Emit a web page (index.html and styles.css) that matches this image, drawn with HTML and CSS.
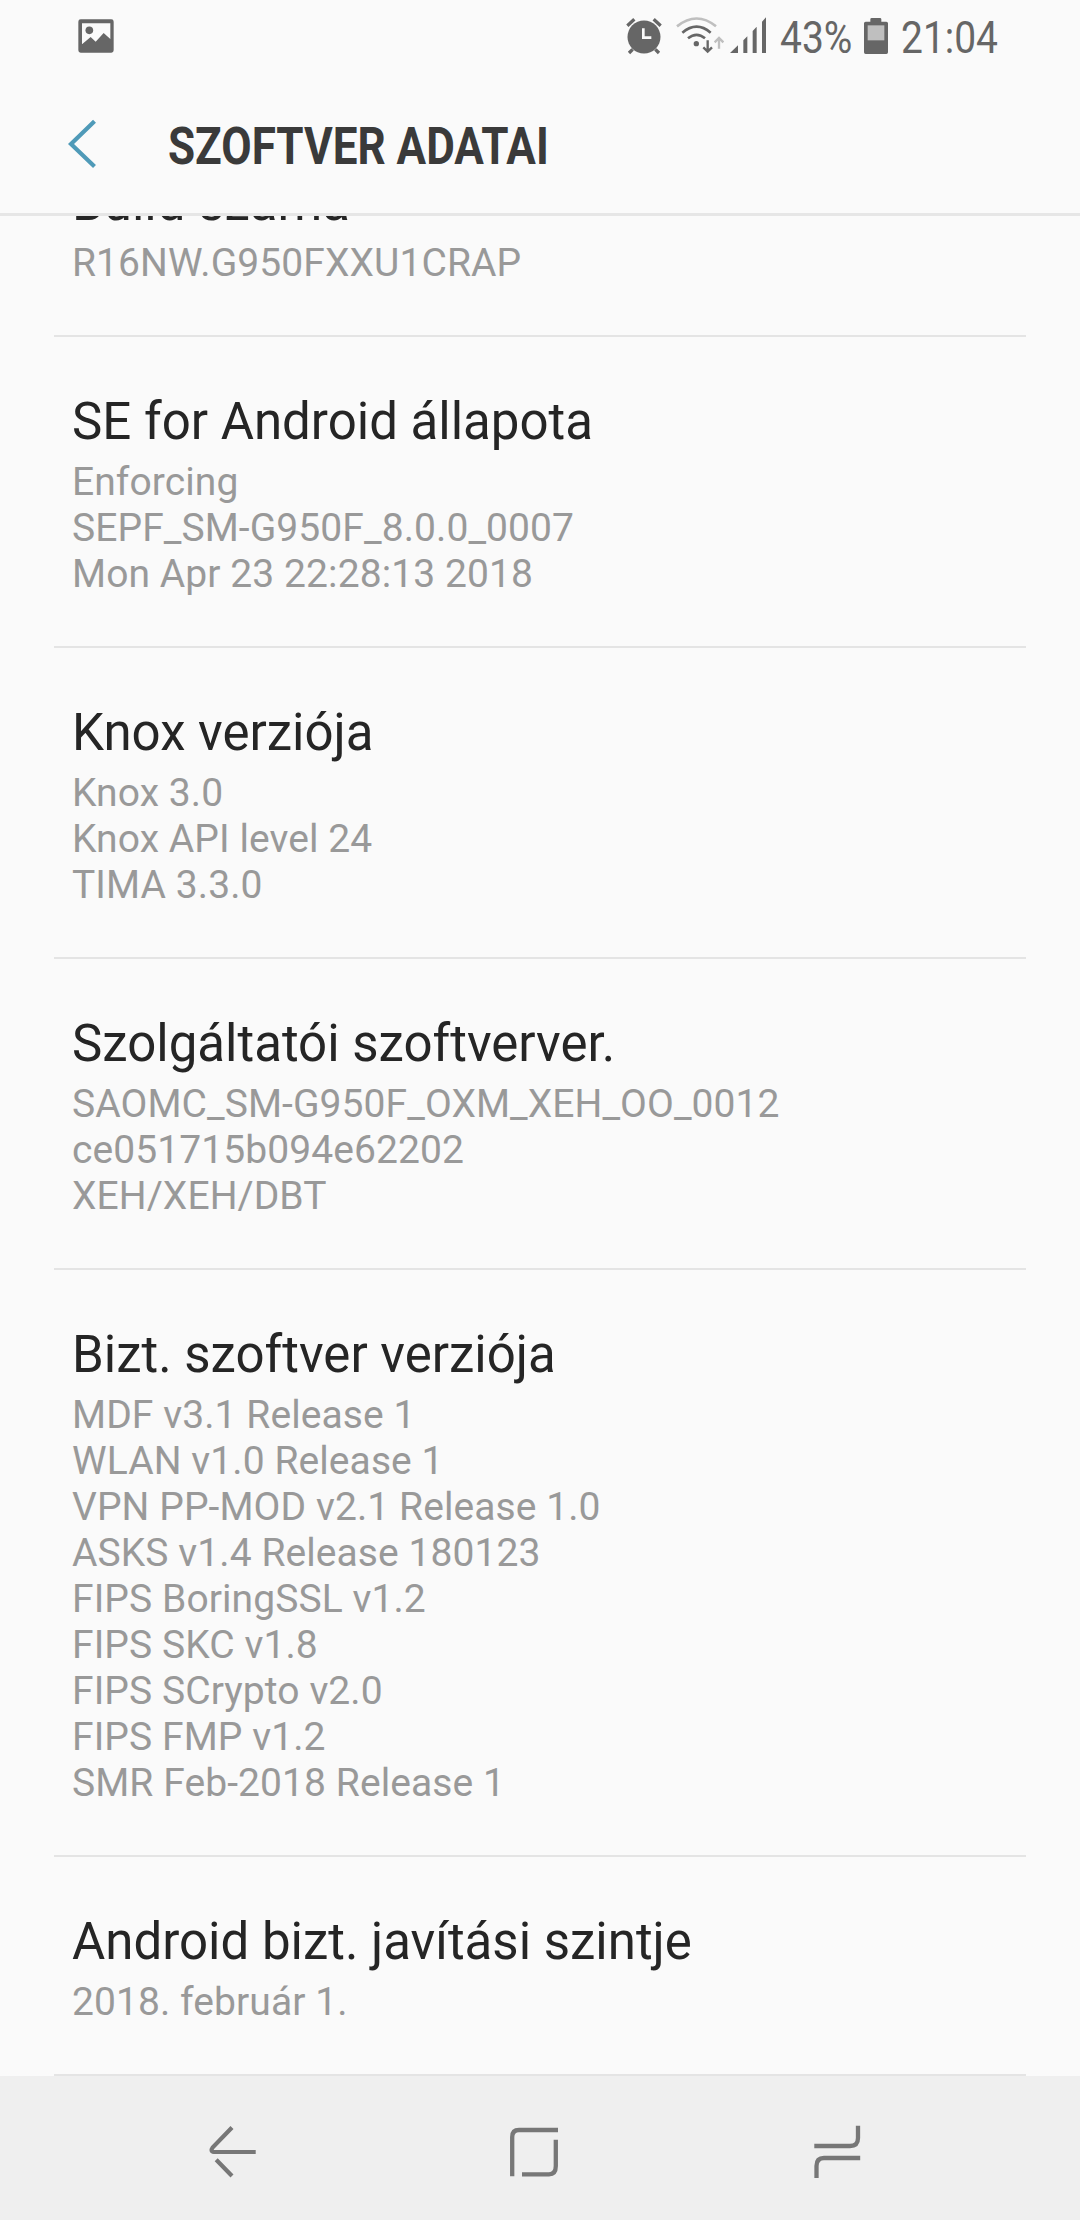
FILE: index.html
```html
<!DOCTYPE html>
<html lang="hu">
<head>
<meta charset="utf-8">
<title>Szoftver adatai</title>
<link rel="stylesheet" href="styles.css">
</head>
<body>
<div class="screen">
  <div class="statusbar">
    <svg class="icon picture" width="36" height="34" viewBox="84 56 108 102">
      <path fill="#666" fill-rule="evenodd" d="M92 57H184Q191 57 191 64V150Q191 157 184 157H92Q85 157 85 150V64Q85 57 92 57ZM96 69V132L122 110L137 124L161 98L181 116V69Z"/>
      <circle cx="118" cy="90" r="11.500" fill="#666"/>
    </svg>
    <svg class="icon alarm" width="36" height="40" viewBox="78 48 108 120">
      <circle cx="132" cy="111" r="49.500" fill="#666"/>
      <path fill="none" stroke="#666" stroke-width="10" d="M82 77L103 58M182 77L161 58M87 159L98 148M177 159L166 148"/>
      <path fill="none" stroke="#fafafa" stroke-width="8" d="M130 85V113H154"/>
    </svg>
    <svg class="icon wifi" width="48" height="40" viewBox="228 48 144 120">
      <g fill="none" stroke-width="8">
        <path stroke="#bfbfbf" d="M231 79Q290 32 348 79"/>
        <path stroke="#666" d="M247 98Q290 62 332 98"/>
        <path stroke="#666" d="M264 115Q290 94 315 115"/>
        <path stroke="#666" stroke-width="7" d="M323 121V155M310 142L323 155L336 142"/>
        <path stroke="#bfbfbf" stroke-width="7" d="M357 146V114M344 127L357 114L370 127"/>
      </g>
      <circle cx="289" cy="131" r="8" fill="#666"/>
    </svg>
    <svg class="icon signal" width="37" height="40" viewBox="390 48 111 120">
      <path fill="#666" d="M390 159L414 136V159ZM430 121L442 109V159H430ZM458 93L470 80V159H458ZM486 65L498 52V159H486Z"/>
    </svg>
    <div class="status-text percent"><span>43%</span></div>
    <svg class="icon battery" width="26" height="40" viewBox="789 48 78 120">
      <path fill="#666" d="M811 65V58Q811 54 815 54H840Q844 54 844 58V65H859Q864 65 864 70V157Q864 162 859 162H797Q792 162 792 157V70Q792 65 797 65Z"/>
      <path fill="#bfbfbf" d="M803 76H853V121H803Z"/>
    </svg>
    <div class="status-text clock"><span>21:04</span></div>
  </div>
  <header class="header">
    <svg class="back" width="30" height="50" viewBox="0 0 30 50"><path fill="none" stroke="#4f9ab8" stroke-width="4.200" d="M26.500 2.200L3 25L26.500 47.500"/></svg>
    <h1 class="title"><span>SZOFTVER ADATAI</span></h1>
  </header>
  <main class="list">
    <section class="item"><h2>Build száma</h2><p>R16NW.G950FXXU1CRAP</p></section>
    <section class="item"><h2>SE for Android állapota</h2><p>Enforcing<br>SEPF_SM-G950F_8.0.0_0007<br>Mon Apr 23 22:28:13 2018</p></section>
    <section class="item"><h2>Knox verziója</h2><p>Knox 3.0<br>Knox API level 24<br>TIMA 3.3.0</p></section>
    <section class="item"><h2>Szolgáltatói szoftverver.</h2><p>SAOMC_SM-G950F_OXM_XEH_OO_0012<br>ce051715b094e62202<br>XEH/XEH/DBT</p></section>
    <section class="item"><h2>Bizt. szoftver verziója</h2><p>MDF v3.1 Release 1<br>WLAN v1.0 Release 1<br>VPN PP-MOD v2.1 Release 1.0<br>ASKS v1.4 Release 180123<br>FIPS BoringSSL v1.2<br>FIPS SKC v1.8<br>FIPS SCrypto v2.0<br>FIPS FMP v1.2<br>SMR Feb-2018 Release 1</p></section>
    <section class="item"><h2>Android bizt. javítási szintje</h2><p>2018. február 1.</p></section>
  </main>
  <nav class="navbar">
    <svg class="nav-back" width="48" height="54" viewBox="0 0 48 54"><path fill="none" stroke="#777" stroke-width="4.200" d="M24 2.500L4.800 22.300Q1.800 26.500 6 27H47.700M8.200 34.800L24 51"/></svg>
    <svg class="nav-home" width="48" height="54" viewBox="0 0 48 54"><path fill="none" stroke="#777" stroke-width="4.300" d="M2.200 51.300V12Q2.200 5 9 5H48M45.800 14.700V41Q45.800 49.300 39 49.300H12"/></svg>
    <svg class="nav-recent" width="48" height="54" viewBox="0 0 48 54"><path fill="none" stroke="#777" stroke-width="4.300" d="M1.300 21H37Q45 21 45 13V0.700M3.500 53V41Q3.500 33 11 33H47.200"/></svg>
  </nav>
</div>
</body>
</html>
```
FILE: styles.css
```css
* { box-sizing: border-box; }
body { margin: 0; background: #fafafa; font-family: Roboto, sans-serif; }
.screen { width: 1080px; height: 2220px; display: flex; flex-direction: column; overflow: hidden; }
.statusbar { height: 72px; display: flex; align-items: flex-start; padding-top: 16px; flex: none; }
.icon { flex: none; display: block; }
.picture { margin-left: 78px; margin-top: 3px; }
.alarm { margin-left: 512px; }
.wifi { margin-left: 14px; }
.signal { margin-left: 6px; }
.battery { margin-left: 9px; }
.status-text { font-size: 45px; line-height: 52px; margin-top: -4px; color: #666; white-space: nowrap; }
.status-text span { display: inline-block; transform-origin: left; transform: scaleX(0.865); }
.percent { width: 74px; margin-left: 13px; }
.clock { width: 100px; margin-left: 12px; }
.header { height: 144px; flex: none; display: flex; align-items: flex-start; border-bottom: 3px solid #e6e6e6; }
.back { margin: 47px 0 0 68px; }
.title { margin: 45px 0 0 70px; font-size: 52px; line-height: 60px; font-weight: 700; color: #3a3a3a; white-space: nowrap; }
.title span { display: inline-block; transform-origin: left; transform: scaleX(0.847); }
.list { flex: 1; min-height: 0; overflow: hidden; padding: 0 54px; }
.item { padding: 55px 18px 49px; border-bottom: 2px solid #e4e4e4; }
.item:first-child { margin-top: -98px; }
.item h2 { margin: 0 0 7px; font-size: 51px; line-height: 60px; font-weight: 400; color: #252525; }
.item p { margin: 0; font-size: 39px; line-height: 46px; letter-spacing: 0.08px; color: #999; }
.navbar { height: 144px; flex: none; background: #efefef; display: flex; padding: 49px 0 0 208px; }
.nav-home { margin-left: 254px; }
.nav-recent { margin-left: 255px; }
```
